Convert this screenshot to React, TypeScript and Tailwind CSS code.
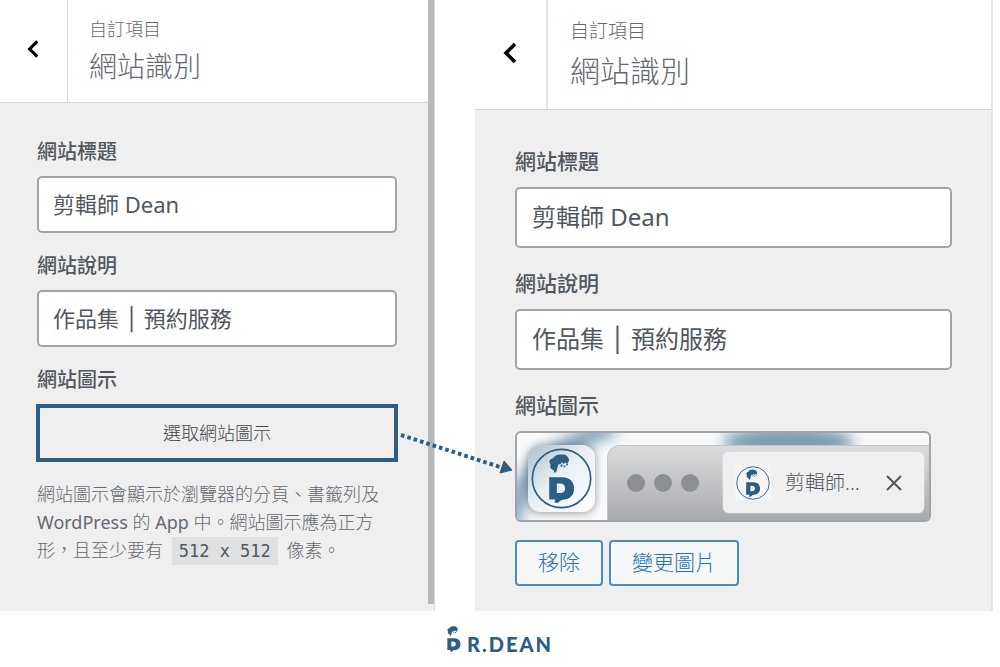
import { useId, useState, type ReactNode } from "react";

type Size = "sm" | "lg";

interface PanelProps {
  size: Size;
  children: ReactNode;
}

interface TextFieldProps {
  size: Size;
  label: string;
  initialValue: string;
}

function Figure() {
  return (
    <>
      <path d="M113 101 C109 93 114 88 123 86 C127 77 138 73 150 75 C161 74 170 82 171 93 C168 97 168 101 164 103 L160 99 L155 103 L149 98 L145 104 L139 104 L136 112 L134 123 L128 131 L124 122 C117 119 111 112 115 107 Z" />
      <path d="M145 106 l5 -2 l2 5 l-6 3 z M155 108 l5 0 l-1 5 l-5 0 z M162 103 l6 -1 l-1 5 l-4 1 z" />
      <path
        fillRule="evenodd"
        d="M111 143 H150 C174 143 186 158 186 177 C186 197 174 209 153 211 C143 211 143 220 134 221 L126 219 L130 210 H111 Z M134 162 V191 H143 C153 191 159 185 159 177 C159 168 153 162 143 162 Z"
      />
    </>
  );
}

function SiteIcon({ className }: { className: string }) {
  return (
    <svg viewBox="56 55 184 184" className={className} fill="#2c5d82" aria-hidden="true">
      <circle cx="148" cy="147" r="88" fill="none" stroke="#2c5d82" strokeWidth="5" />
      <Figure />
    </svg>
  );
}

function Panel({ size, children }: PanelProps) {
  const isSmall = size === "sm";

  return (
    <section
      className={`relative min-w-0 bg-[#efefef] ${isSmall ? "border-r border-[#dcdcde]" : "border-r-2 border-[#e3e3e4]"}`}
    >
      <header className={`flex border-b border-[#d8d8da] bg-white ${isSmall ? "h-[103px]" : "h-[110px]"}`}>
        <button
          type="button"
          aria-label="返回"
          className={`flex shrink-0 items-center justify-center ${
            isSmall ? "w-[68px] border-r border-[#d5d6d8] pr-[2px] pb-1" : "w-[73px] border-r-2 border-[#e3e3e4] pr-[2px] pb-1"
          }`}
        >
          <svg
            viewBox="0 0 14 22"
            className={isSmall ? "h-5 w-3" : "h-[22px] w-[14px]"}
            fill="none"
            stroke="#000"
            strokeWidth="3.6"
            aria-hidden="true"
          >
            <path d="M12 2 L3 11 L12 20" />
          </svg>
        </button>
        <div className={`font-light text-[#646970] ${isSmall ? "px-[21px] pt-4" : "px-[22px] pt-[18px]"}`}>
          <p className={isSmall ? "text-[18px] leading-[26px]" : "text-[19px] leading-[26px]"}>自訂項目</p>
          <h2 className={isSmall ? "text-[28px] leading-[48px]" : "text-[30px] leading-[54px]"}>網站識別</h2>
        </div>
      </header>
      <div className={isSmall ? "px-[37px] pt-[35px] pb-8" : "pt-9 pr-[39px] pb-[25px] pl-10"}>{children}</div>
    </section>
  );
}

function labelClass(size: Size) {
  return `block font-medium text-[#50575e] ${
    size === "sm" ? "mb-[10px] text-[20px] leading-[28px]" : "mb-[11px] text-[21px] leading-[30px]"
  }`;
}

function TextField({ size, label, initialValue }: TextFieldProps) {
  const id = useId();
  const [value, setValue] = useState(initialValue);

  return (
    <div className={size === "sm" ? "mb-[19px]" : "mb-5"}>
      <label htmlFor={id} className={labelClass(size)}>
        {label}
      </label>
      <input
        id={id}
        type="text"
        value={value}
        onChange={(e) => setValue(e.target.value)}
        className={`block w-full rounded-[5px] border-2 border-[#a0a3a7] bg-white pb-1 font-['Noto_Sans','DejaVu_Sans','Noto_Sans_CJK_TC',sans-serif] font-normal text-[#50575e] ${
          size === "sm" ? "h-[57px] px-[14px] text-[22px]" : "h-[61px] px-[15px] text-[24px]"
        }`}
      />
    </div>
  );
}

function DottedArrow() {
  return (
    <svg
      viewBox="0 0 116 50"
      className="pointer-events-none absolute top-6 left-full z-10 h-[50px] w-[116px]"
      aria-hidden="true"
    >
      <path d="M3 7 L102 39" fill="none" stroke="#2c5d82" strokeWidth="4" strokeDasharray="3.6 3.05" />
      <path d="M102 45 L106 33 L114 42 Z" fill="#2c5d82" stroke="#2c5d82" strokeLinejoin="round" />
    </svg>
  );
}

function IconPreview() {
  return (
    <div className="relative mb-[18px] flex h-[91px] max-w-[416px] overflow-hidden rounded-[6px] border-2 border-[#a0a3a7] bg-[#f8f9fa]">
      <svg
        viewBox="0 0 416 91"
        preserveAspectRatio="none"
        className="absolute inset-0 h-full w-full"
        aria-hidden="true"
      >
        <defs>
          <filter id="soft" x="-50%" y="-50%" width="200%" height="200%">
            <feGaussianBlur stdDeviation="7" />
          </filter>
        </defs>
        <g filter="url(#soft)">
          <path d="M-6 100 C-6 54 30 18 98 -8" fill="none" stroke="#86a7be" strokeWidth="20" />
          <ellipse cx="274" cy="10" rx="66" ry="18" fill="#7e9fb6" />
        </g>
      </svg>
      <div className="relative mt-3 ml-[11px] flex size-[67px] shrink-0 items-center justify-center rounded-[13px] bg-linear-to-br from-[#a9bfce] via-[#e9eff3] via-45% to-white shadow-[0_1px_8px_rgba(0,0,0,0.4)]">
        <SiteIcon className="size-[61px]" />
      </div>
      <div className="relative mt-3 ml-3 flex min-w-0 grow rounded-tl-[13px] border-t border-l border-[#c3c5c8] bg-linear-to-b from-[#dcdcde] to-[#a7aaad] pr-[5px] pl-[19px]">
        <div className="mt-7 mr-6 flex shrink-0 gap-[9px]">
          <span className="size-[18px] rounded-full bg-[#8c8f94]" />
          <span className="size-[18px] rounded-full bg-[#8c8f94]" />
          <span className="size-[18px] rounded-full bg-[#8c8f94]" />
        </div>
        <div className="mt-[6px] flex h-[61px] min-w-0 grow items-center rounded-[6px] bg-[#f0f0f1] pr-[22px] pl-3 shadow-[0_0_2px_rgba(255,255,255,0.7)]">
          <span className="flex size-9 shrink-0 items-center justify-center bg-[#f5f5f6]">
            <SiteIcon className="size-[34px]" />
          </span>
          <span className="ml-[14px] grow text-[20px] leading-[28px] font-light whitespace-nowrap text-[#50575e]">
            剪輯師...
          </span>
          <svg
            viewBox="0 0 16 16"
            className="size-4 shrink-0"
            fill="none"
            stroke="#50575e"
            strokeWidth="2"
            aria-hidden="true"
          >
            <path d="M1 1 L15 15 M15 1 L1 15" />
          </svg>
        </div>
      </div>
    </div>
  );
}

export default function App() {
  const actionClass =
    "h-[46px] rounded-[4px] border-2 border-[#4b8bc4] bg-[#f6f7f7] px-[21px] text-[21px] font-light text-[#2271b1]";

  return (
    <div className="min-h-screen bg-white font-['Noto_Sans','Noto_Sans_CJK_TC',sans-serif]">
      <main className="grid grid-cols-[435fr_518fr] gap-10 pr-[7px]">
        <Panel size="sm">
          <TextField size="sm" label="網站標題" initialValue="剪輯師 Dean" />
          <TextField size="sm" label="網站說明" initialValue="作品集 │ 預約服務" />
          <h3 className={labelClass("sm")}>網站圖示</h3>
          <div className="relative -mx-px mb-[18px]">
            <button
              type="button"
              className="block h-[58px] w-full border-4 border-[#2c5d82] text-[18px] font-light text-[#3c434a]"
            >
              選取網站圖示
            </button>
            <DottedArrow />
          </div>
          <p className="text-[18px] leading-[28px] font-light text-[#646970]">
            網站圖示會顯示於瀏覽器的分頁、書籤列及
            <br />
            <span className="font-normal">WordPress</span> 的 <span className="font-normal">App</span> 中。網站圖示應為正方
            <br />
            形，且至少要有{" "}
            <code className="mx-1 bg-[#dfe0e1] px-[7px] py-1 font-['DejaVu_Sans_Mono',monospace] text-[17px] font-normal text-[#50575e]">
              512 x 512
            </code>{" "}
            像素。
          </p>
          <div className="absolute top-0 right-0 h-[604px] w-[6px] bg-[#b5b7b9]" />
        </Panel>

        <Panel size="lg">
          <TextField size="lg" label="網站標題" initialValue="剪輯師 Dean" />
          <TextField size="lg" label="網站說明" initialValue="作品集 │ 預約服務" />
          <h3 className={labelClass("lg")}>網站圖示</h3>
          <IconPreview />
          <div className="flex gap-[6px]">
            <button type="button" className={actionClass}>
              移除
            </button>
            <button type="button" className={actionClass}>
              變更圖片
            </button>
          </div>
        </Panel>
      </main>

      <footer className="flex justify-center pt-[15px] text-[#2c5d82]">
        <div className="flex items-end gap-[6px]">
          <svg viewBox="110 73 78 149" className="h-[26px] w-[14px]" fill="currentColor" aria-hidden="true">
            <Figure />
          </svg>
          <span className="font-['Lato',sans-serif] text-[20px] leading-[16px] font-black tracking-widest">R.DEAN</span>
        </div>
      </footer>
    </div>
  );
}
